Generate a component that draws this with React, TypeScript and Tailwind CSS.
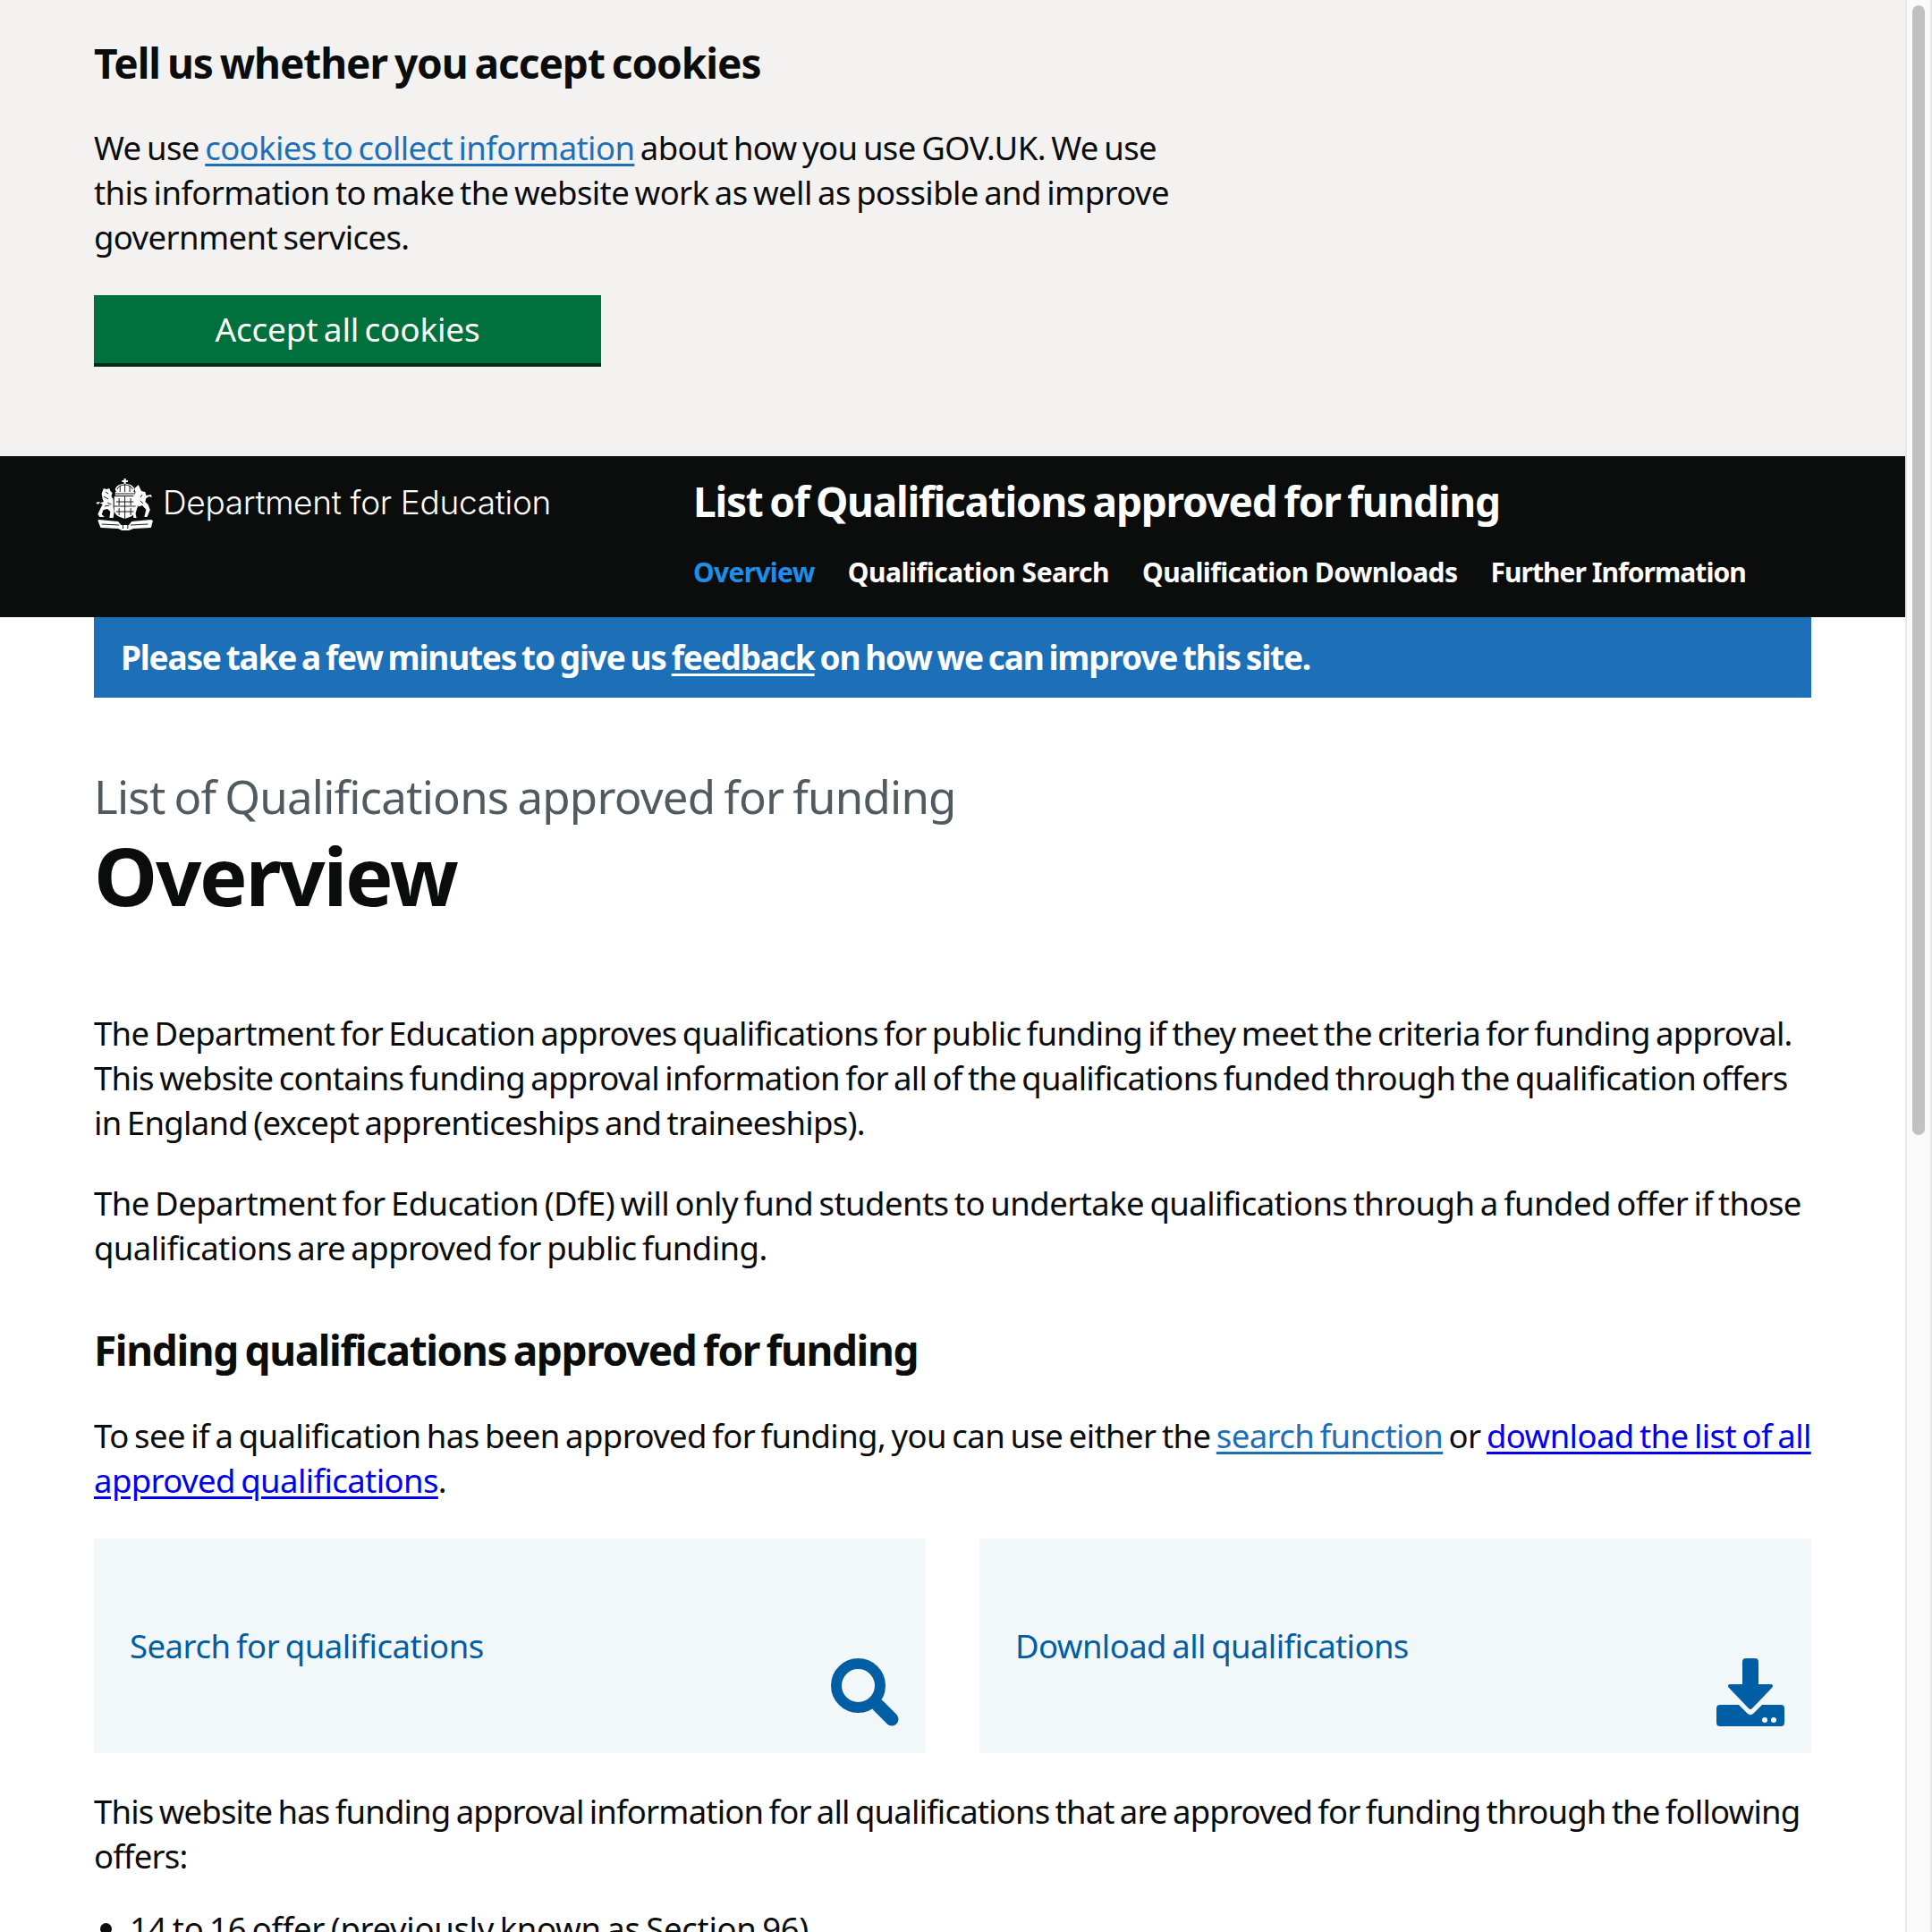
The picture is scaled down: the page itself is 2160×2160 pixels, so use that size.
const sans = "font-['Noto_Sans',sans-serif]";
const size = "text-[36.5px] leading-[50px] [word-spacing:-2.5px]";
const body = `${size} tracking-[-0.72px]`;
const heading = "text-[46px] font-bold leading-[60px] [word-spacing:-3px]";

function Crest() {
  return (
    <svg width="66" height="58" viewBox="0 0 61 58" preserveAspectRatio="none" fill="none" className="shrink-0">
      <g fill="#fff">
        <path d="M31 0h2v2h2v2h-2v2c4 0 8 2 9 6l-1 3H23l-1-3c1-4 5-6 9-6V4h-2V2h2z" />
        <rect x="22" y="15" width="20" height="4" />
        <path d="M21 20h22v15c0 4-3 7-6 8l-5 2-5-2c-3-1-6-4-6-8z" />
        <path d="M10 11l3 1 3-1 1 3 2 2-1 4 2 3v9l1 5-1 7h-4l1-7-3-3-4 1-2 5 3 3H6l-2-3 3-7 2-4-3-2-2 2-2-2 3-1 2 1 3-1-1-3-1-6z" />
        <path d="M46 7l3 7 4 1 1 4 5-1 1 3-3-1-3 2-1 4 3 3 2 6-3 8h-3l2-8-4-5-5 2-2 7 1 5h-3l-1-8v-15l3-5-1-5z" />
        <path d="M5 46l20 2 3 4h8l3-4 20-2 2 1-2 8-18 1-5 2h-7l-4-2-18-1-3-8z" />
      </g>
      <g stroke="#0b0c0c" strokeWidth="0.9">
        <path d="M24 12c1-3 4-5 8-5s7 2 8 5M32 6v9M27 8v7M37 8v7M22 17h20" />
        <path d="M32 20v25M21 31h22M26 22v8M38 22v8M26 33v8M38 33v8M23 26h18M23 37h18" />
        <path d="M8 51l18 1M38 52l18-1M30 50v6M35 50v6" />
        <path d="M12 15l3 2M10 20l5 3M14 27l4 2M11 31l5-1M9 36l3 2M50 18l-2 3M48 25l3 3M45 31l4 1M53 34l-3 3" />
      </g>
    </svg>
  );
}

function SearchIcon() {
  return (
    <svg width="80" height="80" viewBox="0 0 80 80" fill="none">
      <circle cx="34.5" cy="34.5" r="24.5" stroke="#005ea5" strokeWidth="12" />
      <path d="M57 57l15 15" stroke="#005ea5" strokeWidth="15" strokeLinecap="round" />
    </svg>
  );
}

function DownloadIcon() {
  return (
    <svg width="76" height="76" viewBox="0 0 76 76" fill="#005ea5">
      <path d="M29 4a4 4 0 0 1 4-4h10a4 4 0 0 1 4 4v25h13c3 0 4 2 2 4L40 56a3 3 0 0 1-4 0L14 33c-2-2-1-4 2-4h13z" />
      <path d="M4 52h21l10 10a5 5 0 0 0 6 0l10-10h21a4 4 0 0 1 4 4v16a4 4 0 0 1-4 4H4a4 4 0 0 1-4-4V56a4 4 0 0 1 4-4z" />
      <circle cx="54" cy="69" r="3" fill="#f2f7fa" />
      <circle cx="64" cy="69" r="3" fill="#f2f7fa" />
    </svg>
  );
}

export default function App() {
  return (
    <div className={`flex h-[2160px] w-[2160px] overflow-hidden bg-white text-[#0b0c0c] ${sans}`}>
      <div className="w-[2130px] shrink-0">
        <section className="h-[510px] bg-[#f3f2f1] px-[105px] pt-[40px]">
          <h2 className={`tracking-[-1.05px] ${heading}`}>Tell us whether you accept cookies</h2>
          <p className={`mt-[40px] w-[1230px] tracking-[-0.6px] ${size}`}>
            We use <a className="text-[#1d70b8] underline underline-offset-4">cookies to collect information</a> about how you use GOV.UK. We use this information to make the website work as well as possible and improve government services.
          </p>
          <button className="mt-[40px] flex h-[80px] w-[567px] items-center justify-center border-b-[4px] border-[#002d18] bg-[#00703c] text-[37px] tracking-[-0.2px] text-white [word-spacing:-3px]">
            Accept all cookies
          </button>
        </section>
        <header className="flex h-[180px] bg-[#0b0c0c] pl-[105px] text-white">
          <div className="flex h-[104px] w-[670px] items-center gap-[11px] pt-[4px]">
            <Crest />
            <span className="mb-[4px] font-['Inter',sans-serif] text-[37px] font-light tracking-[-0.3px]">Department for Education</span>
          </div>
          <div className="pt-[20px]">
            <div className={`tracking-[-1.26px] ${heading}`}>List of Qualifications approved for funding</div>
            <nav className="mt-[25px] flex gap-[37px] text-[30px] font-bold leading-[50px]">
              <a className="tracking-[-0.7px] text-[#1d8feb]">Overview</a>
              <a className="tracking-[-0.45px]">Qualification Search</a>
              <a className="tracking-[-0.6px]">Qualification Downloads</a>
              <a className="tracking-[-0.95px]">Further Information</a>
            </nav>
          </div>
        </header>
        <main className="px-[105px]">
          <div className="flex h-[90px] items-center bg-[#1d70b8] px-[30px] text-[37px] font-bold tracking-[-1.2px] text-white [word-spacing:-2.5px]">
            <span>Please take a few minutes to give us <a className="underline underline-offset-4">feedback</a> on how we can improve this site.</span>
          </div>
          <div className="mt-[80px] text-[51px] leading-[60px] tracking-[-0.8px] text-[#505a5f] [word-spacing:-2.5px]">List of Qualifications approved for funding</div>
          <h1 className="mt-[8px] text-[90px] font-bold leading-[100px] tracking-[-2.3px]">Overview</h1>
          <p className={`mt-[102px] ${body}`}>
            The Department for Education approves qualifications for public funding if they meet the criteria for funding approval. This website contains funding approval information for all of the qualifications funded through the qualification offers in England (except apprenticeships and traineeships).
          </p>
          <p className={`mt-[40px] tracking-[-0.58px] ${size}`}>
            The Department for Education (DfE) will only fund students to undertake qualifications through a funded offer if those qualifications are approved for public funding.
          </p>
          <h2 className={`mt-[59px] tracking-[-1.4px] ${heading}`}>Finding qualifications approved for funding</h2>
          <p className={`mt-[41px] tracking-[-0.6px] ${size}`}>
            To see if a qualification has been approved for funding, you can use either the <a className="text-[#1d70b8] underline underline-offset-4">search function</a> or <a className="text-[#0000ee] underline underline-offset-4">download the list of all approved qualifications</a>.
          </p>
          <div className="mt-[40px] grid grid-cols-2 gap-[60px]">
            <div className="flex h-[240px] bg-[#f2f7fa] pl-[40px] pr-[30px] pb-[30px]">
              <span className={`mt-[95px] flex-1 tracking-[-0.5px] text-[#005ea5] ${size}`}>Search for qualifications</span>
              <div className="self-end"><SearchIcon /></div>
            </div>
            <div className="flex h-[240px] bg-[#f2f7fa] pl-[40px] pr-[30px] pb-[30px]">
              <span className={`mt-[95px] flex-1 tracking-[-0.6px] text-[#005ea5] ${size}`}>Download all qualifications</span>
              <div className="self-end"><DownloadIcon /></div>
            </div>
          </div>
          <p className={`mt-[40px] tracking-[-0.82px] ${size}`}>
            This website has funding approval information for all qualifications that are approved for funding through the following offers:
          </p>
          <ul className={`mt-[31px] list-disc pl-[40px] tracking-[-0.32px] ${size}`}>
            <li>14 to 16 offer (previously known as Section 96)</li>
          </ul>
        </main>
      </div>
      <div className="h-full w-[30px] shrink-0 border-x-2 border-[#e8e8e8] bg-[#fafafa] px-[6px] pt-[6px]">
        <div className="h-[1263px] w-full rounded-full bg-[#c1c1c1]" />
      </div>
    </div>
  );
}
